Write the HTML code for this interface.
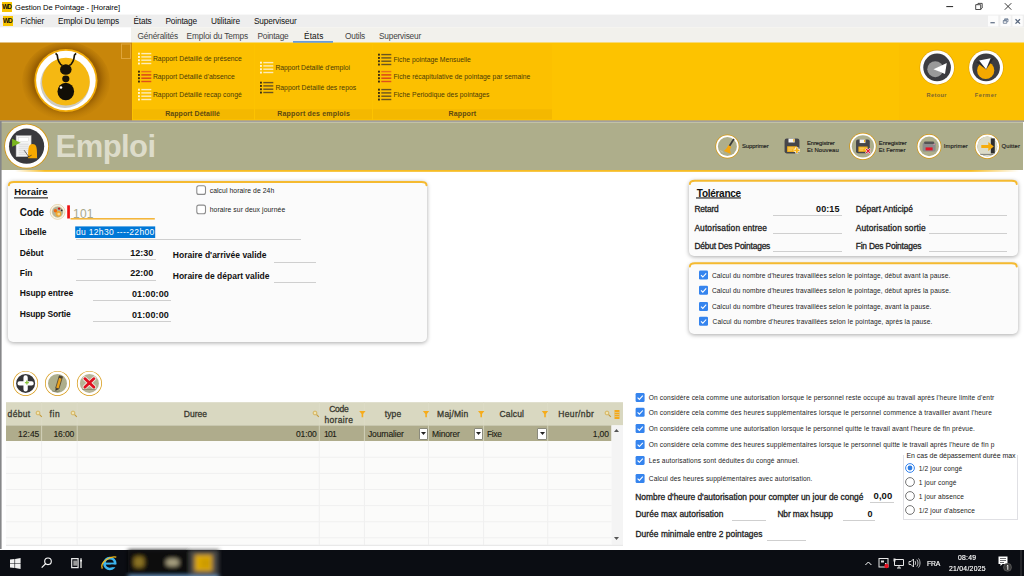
<!DOCTYPE html>
<html><head><meta charset="utf-8"><title>Gestion De Pointage</title>
<style>
*{margin:0;padding:0;box-sizing:border-box}
html,body{width:1024px;height:576px;overflow:hidden;background:#fff;font-family:"Liberation Sans",sans-serif;color:#000}
.a{position:absolute;white-space:nowrap}
.ul{height:1px;background:#cfcfcf}
.cb{width:8.7px;height:8.7px;border:1px solid #7c7c7c;border-radius:2px;background:#fff}
.tbl{font-size:5.8px;line-height:7px;color:#222}
.panel{background:#fbfbfb;border-radius:5px;box-shadow:0 1px 4px rgba(0,0,0,.34);border-top:2px solid #f4b930}
</style></head><body>
<div class="a" style="left:0px;top:0px;width:1024px;height:14px;background:#fff;"></div>
<svg class="a" style="left:0px;top:14px" width="1024" height="14"><rect x="0.00" y="0.60" width="1024.00" height="12.70" fill="#eeeeee"/></svg>
<svg class="a" style="left:131px;top:27px" width="893" height="17"><rect x="0.00" y="0.30" width="893.00" height="16.00" fill="#f2f1ec"/></svg>
<svg class="a" style="left:132px;top:42px" width="892" height="79"><rect x="0.00" y="0.50" width="892.00" height="78.50" fill="#fdc300"/></svg>
<svg class="a" style="left:0px;top:42px" width="132" height="79"><rect x="0.00" y="0.50" width="132.00" height="78.50" fill="#c8860a"/></svg>
<svg class="a" style="left:0px;top:120px" width="1024" height="2"><rect x="0.00" y="0.30" width="1024.00" height="1.70" fill="#a3a09e"/></svg>
<div class="a" style="left:1px;top:122px;width:1022px;height:48px;background:#aeae8b;border-top:1px solid #c2c2a6;"></div>
<div class="a" style="left:1px;top:170px;width:1022px;height:2px;background:linear-gradient(180deg,#f6bc24 0,#f6bc24 70%,rgba(255,255,255,0) 100%),#fff;-webkit-mask-image:linear-gradient(90deg,transparent 0,transparent 14px,#000 44px,#000 970px,transparent 1018px);"></div>
<svg class="a" style="left:0px;top:121px" width="2" height="428"><rect x="0.00" y="0.00" width="1.60" height="428.00" fill="#868789"/></svg>
<div class="a" style="left:0px;top:550px;width:1024px;height:26px;background:#0b0d13;"></div>
<div class="a" style="left:2px;top:2px;width:10px;height:10px;background:#f8c400;font-size:6.500px;line-height:10px;font-weight:bold;letter-spacing:-1.100px;text-indent:-1px;text-align:center;color:#111">WD</div>
<div class="a" style="left:15.0px;top:2.5px;font-size:7.6px;line-height:10px;color:#000;letter-spacing:-0.03px;">Gestion De Pointage - [Horaire]</div>
<svg class="a" style="left:940px;top:0" width="84" height="14" viewBox="0 0 84 14"><path d="M6.300 6.600h6.800" stroke="#222" stroke-width="1" fill="none"/><path d="M35.700 4.700h5v4.800h-5z M37 4.700l1-1.300h4.200v4.600l-1.400 1.300" stroke="#222" stroke-width=".8" fill="none"/><path d="M64.800 3.200l6.500 6.500M71.300 3.200l-6.500 6.500" stroke="#222" stroke-width=".9" fill="none"/></svg>
<div class="a" style="left:2.5px;top:15.5px;width:10.5px;height:10px;background:#f8c400;font-size:6.500px;line-height:10px;font-weight:bold;letter-spacing:-1.100px;text-indent:-1px;text-align:center;color:#111">WD</div>
<div class="a" style="left:20.5px;top:15.7px;font-size:8.3px;line-height:10px;color:#111;letter-spacing:-0.20px;">Fichier</div>
<div class="a" style="left:58.0px;top:15.7px;font-size:8.3px;line-height:10px;color:#111;letter-spacing:-0.15px;">Emploi Du temps</div>
<div class="a" style="left:133.5px;top:15.7px;font-size:8.3px;line-height:10px;color:#111;letter-spacing:-0.18px;">États</div>
<div class="a" style="left:165.5px;top:15.7px;font-size:8.3px;line-height:10px;color:#111;letter-spacing:-0.16px;">Pointage</div>
<div class="a" style="left:211.0px;top:15.7px;font-size:8.3px;line-height:10px;color:#111;letter-spacing:-0.10px;">Utilitaire</div>
<div class="a" style="left:254.0px;top:15.7px;font-size:8.3px;line-height:10px;color:#111;letter-spacing:-0.16px;">Superviseur</div>
<svg class="a" style="left:988px;top:15px" width="11" height="12"><rect x="0.00" y="0.60" width="10.30" height="10.80" fill="#fcfcfc"/></svg>
<svg class="a" style="left:1000px;top:15px" width="11" height="12"><rect x="0.40" y="0.60" width="10.30" height="10.80" fill="#fcfcfc"/></svg>
<svg class="a" style="left:1012px;top:15px" width="11" height="12"><rect x="0.40" y="0.60" width="10.30" height="10.80" fill="#fcfcfc"/></svg>
<svg class="a" style="left:988px;top:15px" width="36" height="12" viewBox="988 15 36 12"><path d="M990.400 22.700h4.400" stroke="#6a788c" stroke-width="1.300"/><path d="M1003.300 20.500h3.400v2.800h-3.400z M1004.600 20.200v-1.300h3.400v2.800h-1" stroke="#6a7a92" stroke-width=".8" fill="none"/><path d="M1003.300 20.900h3.400M1004.600 19.300h3.400" stroke="#6a7a92" stroke-width=".9"/><path d="M1015.500 19.300l4.500 4.300M1020 19.300l-4.500 4.300" stroke="#56657c" stroke-width="1.300" fill="none"/></svg>
<div class="a" style="left:137.5px;top:31.2px;font-size:8.3px;line-height:10px;color:#444;letter-spacing:-0.18px;">Généralités</div>
<div class="a" style="left:186.5px;top:31.2px;font-size:8.3px;line-height:10px;color:#444;letter-spacing:-0.13px;">Emploi du Temps</div>
<div class="a" style="left:257.5px;top:31.2px;font-size:8.3px;line-height:10px;color:#444;letter-spacing:-0.22px;">Pointage</div>
<div class="a" style="left:304.0px;top:31.2px;font-size:8.3px;line-height:10px;color:#111;letter-spacing:0.12px;">États</div>
<div class="a" style="left:345.0px;top:31.2px;font-size:8.3px;line-height:10px;color:#444;letter-spacing:-0.20px;">Outils</div>
<div class="a" style="left:379.0px;top:31.2px;font-size:8.3px;line-height:10px;color:#444;letter-spacing:-0.21px;">Superviseur</div>
<svg class="a" style="left:293px;top:41px" width="40" height="2"><rect x="0.00" y="0.20" width="40.00" height="1.40" fill="#4486dc"/></svg>
<div class="a" style="left:133px;top:44px;width:121px;height:76px;background:#fcc000;"></div>
<svg class="a" style="left:133px;top:109px" width="121" height="11"><rect x="0.00" y="0.30" width="121.00" height="10.00" fill="#f4b800"/></svg>
<div class="a" style="left:165.2px;top:108.8px;font-size:7px;line-height:9px;color:#5e4a10;font-weight:bold;letter-spacing:0.07px;">Rapport Détaillé</div>
<div class="a" style="left:255px;top:44px;width:117px;height:76px;background:#fcc000;"></div>
<svg class="a" style="left:255px;top:109px" width="117" height="11"><rect x="0.00" y="0.30" width="117.00" height="10.00" fill="#f4b800"/></svg>
<div class="a" style="left:277.3px;top:108.8px;font-size:7px;line-height:9px;color:#5e4a10;font-weight:bold;letter-spacing:0.18px;">Rapport des emplois</div>
<div class="a" style="left:373px;top:44px;width:179px;height:76px;background:#fcc000;"></div>
<svg class="a" style="left:373px;top:109px" width="179" height="11"><rect x="0.00" y="0.30" width="179.00" height="10.00" fill="#f4b800"/></svg>
<div class="a" style="left:448.5px;top:108.8px;font-size:7px;line-height:9px;color:#5e4a10;font-weight:bold;letter-spacing:0.14px;">Rapport</div>
<div class="a" style="left:899px;top:44px;width:125px;height:76px;background:#fcc000;"></div>
<svg class="a" style="left:137.5px;top:51.8px" width="14" height="13" viewBox="0 0 14 13"><rect x="0" y="0.7" width="1.900" height="1.900" fill="#fff6d8"/><rect x="3.300" y="0.9" width="10" height="1.400" fill="#fdecb8"/><rect x="0" y="4.0" width="1.900" height="1.900" fill="#fff6d8"/><rect x="3.300" y="4.2" width="10" height="1.400" fill="#fdecb8"/><rect x="0" y="7.3" width="1.900" height="1.900" fill="#fff6d8"/><rect x="3.300" y="7.5" width="10" height="1.400" fill="#fdecb8"/><rect x="0" y="10.6" width="1.900" height="1.900" fill="#fff6d8"/><rect x="3.300" y="10.8" width="10" height="1.400" fill="#fdecb8"/></svg>
<div class="a" style="left:152.9px;top:54.7px;font-size:6.8px;line-height:8px;color:#4a3a08;letter-spacing:0.03px;">Rapport Détaillé de présence</div>
<svg class="a" style="left:137.5px;top:70.3px" width="14" height="13" viewBox="0 0 14 13"><rect x="0" y="0.7" width="1.900" height="1.900" fill="#3a2a10"/><rect x="3.300" y="0.9" width="10" height="1.400" fill="#e8701a"/><rect x="0" y="4.0" width="1.900" height="1.900" fill="#3a2a10"/><rect x="3.300" y="4.2" width="10" height="1.400" fill="#d8401a"/><rect x="0" y="7.3" width="1.900" height="1.900" fill="#3a2a10"/><rect x="3.300" y="7.5" width="10" height="1.400" fill="#d8401a"/><rect x="0" y="10.6" width="1.900" height="1.900" fill="#3a2a10"/><rect x="3.300" y="10.8" width="10" height="1.400" fill="#e0501a"/></svg>
<div class="a" style="left:152.9px;top:73.2px;font-size:6.8px;line-height:8px;color:#4a3a08;letter-spacing:0.02px;">Rapport Détaillé d'absence</div>
<svg class="a" style="left:137.5px;top:88.3px" width="14" height="13" viewBox="0 0 14 13"><rect x="0" y="0.7" width="1.900" height="1.900" fill="#fff6d8"/><rect x="3.300" y="0.9" width="10" height="1.400" fill="#fdecb8"/><rect x="0" y="4.0" width="1.900" height="1.900" fill="#fff6d8"/><rect x="3.300" y="4.2" width="10" height="1.400" fill="#fdecb8"/><rect x="0" y="7.3" width="1.900" height="1.900" fill="#fff6d8"/><rect x="3.300" y="7.5" width="10" height="1.400" fill="#fdecb8"/><rect x="0" y="10.6" width="1.900" height="1.900" fill="#fff6d8"/><rect x="3.300" y="10.8" width="10" height="1.400" fill="#fdecb8"/></svg>
<div class="a" style="left:152.9px;top:91.2px;font-size:6.8px;line-height:8px;color:#4a3a08;letter-spacing:0.03px;">Rapport Détaillé recap congé</div>
<svg class="a" style="left:260px;top:60.9px" width="14" height="13" viewBox="0 0 14 13"><rect x="0" y="0.7" width="1.900" height="1.900" fill="#fff6d8"/><rect x="3.300" y="0.9" width="10" height="1.400" fill="#fdecb8"/><rect x="0" y="4.0" width="1.900" height="1.900" fill="#fff6d8"/><rect x="3.300" y="4.2" width="10" height="1.400" fill="#fdecb8"/><rect x="0" y="7.3" width="1.900" height="1.900" fill="#fff6d8"/><rect x="3.300" y="7.5" width="10" height="1.400" fill="#fdecb8"/><rect x="0" y="10.6" width="1.900" height="1.900" fill="#fff6d8"/><rect x="3.300" y="10.8" width="10" height="1.400" fill="#fdecb8"/></svg>
<div class="a" style="left:275.4px;top:63.8px;font-size:6.8px;line-height:8px;color:#4a3a08;letter-spacing:-0.05px;">Rapport Détaillé d'emploi</div>
<svg class="a" style="left:260px;top:80.7px" width="14" height="13" viewBox="0 0 14 13"><rect x="0" y="0.7" width="1.900" height="1.900" fill="#3a2e12"/><rect x="3.300" y="0.9" width="10" height="1.400" fill="#6a5420"/><rect x="0" y="4.0" width="1.900" height="1.900" fill="#3a2e12"/><rect x="3.300" y="4.2" width="10" height="1.400" fill="#6a5420"/><rect x="0" y="7.3" width="1.900" height="1.900" fill="#3a2e12"/><rect x="3.300" y="7.5" width="10" height="1.400" fill="#6a5420"/><rect x="0" y="10.6" width="1.900" height="1.900" fill="#3a2e12"/><rect x="3.300" y="10.8" width="10" height="1.400" fill="#6a5420"/></svg>
<div class="a" style="left:275.4px;top:83.6px;font-size:6.8px;line-height:8px;color:#4a3a08;letter-spacing:0.01px;">Rapport Détaillé des repos</div>
<svg class="a" style="left:378px;top:53.0px" width="14" height="13" viewBox="0 0 14 13"><rect x="0" y="0.7" width="1.900" height="1.900" fill="#3a2e12"/><rect x="3.300" y="0.9" width="10" height="1.400" fill="#6a5420"/><rect x="0" y="4.0" width="1.900" height="1.900" fill="#3a2e12"/><rect x="3.300" y="4.2" width="10" height="1.400" fill="#6a5420"/><rect x="0" y="7.3" width="1.900" height="1.900" fill="#3a2e12"/><rect x="3.300" y="7.5" width="10" height="1.400" fill="#6a5420"/><rect x="0" y="10.6" width="1.900" height="1.900" fill="#3a2e12"/><rect x="3.300" y="10.8" width="10" height="1.400" fill="#6a5420"/></svg>
<div class="a" style="left:393.4px;top:55.9px;font-size:6.8px;line-height:8px;color:#4a3a08;">Fiche pointage Mensuelle</div>
<svg class="a" style="left:378px;top:70.3px" width="14" height="13" viewBox="0 0 14 13"><rect x="0" y="0.7" width="1.900" height="1.900" fill="#3a2a10"/><rect x="3.300" y="0.9" width="10" height="1.400" fill="#e8701a"/><rect x="0" y="4.0" width="1.900" height="1.900" fill="#3a2a10"/><rect x="3.300" y="4.2" width="10" height="1.400" fill="#d8401a"/><rect x="0" y="7.3" width="1.900" height="1.900" fill="#3a2a10"/><rect x="3.300" y="7.5" width="10" height="1.400" fill="#d8401a"/><rect x="0" y="10.6" width="1.900" height="1.900" fill="#3a2a10"/><rect x="3.300" y="10.8" width="10" height="1.400" fill="#e0501a"/></svg>
<div class="a" style="left:393.4px;top:73.2px;font-size:6.8px;line-height:8px;color:#4a3a08;letter-spacing:0.04px;">Fiche récapitulative de pointage par semaine</div>
<svg class="a" style="left:378px;top:88.3px" width="14" height="13" viewBox="0 0 14 13"><rect x="0" y="0.7" width="1.900" height="1.900" fill="#3a2e12"/><rect x="3.300" y="0.9" width="10" height="1.400" fill="#6a5420"/><rect x="0" y="4.0" width="1.900" height="1.900" fill="#3a2e12"/><rect x="3.300" y="4.2" width="10" height="1.400" fill="#6a5420"/><rect x="0" y="7.3" width="1.900" height="1.900" fill="#3a2e12"/><rect x="3.300" y="7.5" width="10" height="1.400" fill="#6a5420"/><rect x="0" y="10.6" width="1.900" height="1.900" fill="#3a2e12"/><rect x="3.300" y="10.8" width="10" height="1.400" fill="#6a5420"/></svg>
<div class="a" style="left:393.4px;top:91.2px;font-size:6.8px;line-height:8px;color:#4a3a08;letter-spacing:0.03px;">Fiche Periodique des pointages</div>
<svg class="a" style="left:0;top:43px" width="132" height="78" viewBox="0 0 132 78">
<defs><radialGradient id="lg" cx="50%" cy="48%" r="55%"><stop offset="0" stop-color="#7a4800"/><stop offset=".7" stop-color="#9a6002"/><stop offset="1" stop-color="#c8870a" stop-opacity="0"/></radialGradient></defs>
<ellipse cx="66" cy="38" rx="44" ry="39" fill="url(#lg)"/>
<circle cx="65.900" cy="37.500" r="31.600" fill="#f4ae0a"/>
<circle cx="65.900" cy="37.500" r="29.800" fill="#fff"/>
<circle cx="65" cy="40.300" r="24.600" fill="#cfcbc0"/>
<circle cx="65.900" cy="38.700" r="23.900" fill="#f5b812"/>
<path d="M62.500 22.500c-3.500-1.500-4.800-5.500-5.300-10.500l-1.600-1.700M69.200 22.500c3.500-1.500 4.800-5.500 5.300-10.500l1.600-1.700" stroke="#1a1408" stroke-width="1.700" fill="none"/>
<ellipse cx="65.800" cy="26.500" rx="5.800" ry="5.300" fill="#161208"/>
<ellipse cx="65.800" cy="35.800" rx="3.600" ry="3.400" fill="#161208"/>
<ellipse cx="65.800" cy="48.500" rx="8.300" ry="8.800" fill="#120e06"/>
<circle cx="61" cy="44.500" r="1.300" fill="#fff"/>
<rect x="121.500" y="1" width="9" height="14.500" fill="none" stroke="#dfa53a" stroke-width="1"/>
</svg>
<svg class="a" style="left:915px;top:45px" width="95" height="45" viewBox="0 0 95 45">
<g transform="translate(22.100,22.400)"><circle r="17.600" fill="#e0a000"/><circle r="17" fill="#fff"/><circle r="13.800" fill="#3c3c40"/><circle cx="-1.800" cy="1.800" r="8" fill="#9a9a9a"/><path d="M-2 1.800L10-4.500 8 6.800z" fill="#2a2a2e"/><path d="M-3.600 1.800L9.700-4.300 7.900 6.700z" fill="#fff"/></g>
<g transform="translate(71.100,22.400)"><circle r="17.600" fill="#e0a000"/><circle r="17" fill="#fff"/><circle r="13.800" fill="#3c3c40"/><circle cx="-.4" cy="3" r="8.600" fill="#f4a800"/><path d="M-10-5.500L8-9.500 0 2z" fill="#2a2a2e"/><path d="M-7-6.800L4.500-9.200 0 1.800z" fill="#fff"/></g>
</svg>
<div class="a" style="left:926.5px;top:92.4px;font-size:5.6px;line-height:7px;color:#7a6430;font-weight:bold;letter-spacing:0.38px;">Retour</div>
<div class="a" style="left:974.8px;top:92.4px;font-size:5.6px;line-height:7px;color:#7a6430;font-weight:bold;letter-spacing:0.54px;">Fermer</div>
<div class="a" style="left:55.500px;top:128.800px;font-size:31px;line-height:36px;font-weight:bold;color:#dddcca;letter-spacing:-.55px">Emploi</div>
<svg class="a" style="left:3px;top:123px" width="48" height="48" viewBox="0 0 48 48">
<g transform="translate(23.600,23.200)"><circle r="22.400" fill="#d6960c"/><circle r="21.600" fill="#fff"/><circle r="17.600" fill="#38383c"/>
<rect x="-10.500" y="-10.500" width="15" height="21" fill="#f4f4f4" stroke="#bbb" stroke-width=".5"/>
<rect x="-8" y="-8.500" width="10" height="4" fill="#fff" stroke="#ccc" stroke-width=".4"/>
<path d="M-8-2h10M-8 0h10M-8 2h10M-8 4h10M-8 6h10M-8 8h8" stroke="#c8c8c8" stroke-width=".6"/>
<path d="M-14.500-7.500l8.500 4-8.500 4z" fill="#7ab51d"/>
<path d="M1.500 12c0-4 0-10 1-12 1-3 6-3 7 0 1 2 1 8 1 12z" fill="#f6a800"/>
<path d="M-2.500 4l5 7M-1 12l6-3" stroke="#333" stroke-width=".7"/>
</g></svg>
<svg class="a" style="left:713px;top:132px" width="29" height="29" viewBox="-14.40 -14.50 29 29"><circle r="12" fill="#d6960c"/><circle r="11.3" fill="#fff"/><circle r="9.5" fill="#aeae8b"/><path d="M6.500-7.500L2-0.500" stroke="#3a3a3a" stroke-width="1.700"/><path d="M1-1.500l3 2-1.500 2.500 1 4.500-7-3 3-3z" fill="#f4a60c"/><path d="M-7 4l3 2" stroke="#c8c6b0" stroke-width="1"/></svg>
<div class="a" style="left:742.0px;top:143.3px;font-size:5.9px;line-height:7px;color:#1c1c1c;letter-spacing:-0.06px;-webkit-text-stroke:.15px #1c1c1c;">Supprimer</div>
<svg class="a" style="left:782.8px;top:137.4px" width="18" height="18" viewBox="-9 -9 18 18"><g transform="scale(1.350)"><rect x="-5.500" y="-5.500" width="11" height="11" rx="1.600" fill="#46464a"/><rect x="-2.600" y="-5.500" width="4.600" height="2.900" fill="#f4f4f4"/><rect x=".9" y="-5.200" width=".9" height="2" fill="#f6b21a"/><rect x="-3.600" y=".2" width="7.400" height="4.200" fill="#f6b21a"/><path d="M-2.800 1.500h4M-2.800 3h3" stroke="#fbe0a0" stroke-width=".5"/><path d="M1.300 3.200h4.600M3.600 .9v4.600" stroke="#fff" stroke-width="2.300"/><path d="M1.600 3.200h4M3.600 1.200v4" stroke="#f6b21a" stroke-width="1.300"/></g></svg>
<div class="a" style="left:807.0px;top:139.9px;font-size:5.9px;line-height:7px;color:#1c1c1c;letter-spacing:-0.10px;-webkit-text-stroke:.15px #1c1c1c;">Enregistrer</div>
<div class="a" style="left:807.0px;top:147.0px;font-size:5.9px;line-height:7px;color:#1c1c1c;letter-spacing:0.10px;-webkit-text-stroke:.15px #1c1c1c;">Et Nouveau</div>
<svg class="a" style="left:848px;top:132px" width="29" height="29" viewBox="-14.90 -14.30 29 29"><circle r="13.6" fill="#d6960c"/><circle r="12.9" fill="#fff"/><circle r="11.1" fill="#aeae8b"/><g transform="scale(1.250)"><rect x="-5.500" y="-5.500" width="11" height="11" rx="1.600" fill="#46464a"/><rect x="-2.600" y="-5.500" width="4.600" height="2.900" fill="#f4f4f4"/><rect x=".9" y="-5.200" width=".9" height="2" fill="#f6b21a"/><rect x="-3.600" y=".2" width="7.400" height="4.200" fill="#f6b21a"/><path d="M-2.800 1.500h4M-2.800 3h3" stroke="#fbe0a0" stroke-width=".5"/></g><path d="M3 2.500l4.500 4.500M7.500 2.500l-4.500 4.500" stroke="#fff" stroke-width="2.200"/><path d="M3.200 2.700l4.100 4.100M7.300 2.700l-4.100 4.100" stroke="#e01838" stroke-width="1.200"/></svg>
<div class="a" style="left:878.8px;top:139.9px;font-size:5.9px;line-height:7px;color:#1c1c1c;letter-spacing:-0.09px;-webkit-text-stroke:.15px #1c1c1c;">Enregistrer</div>
<div class="a" style="left:878.8px;top:147.0px;font-size:5.9px;line-height:7px;color:#1c1c1c;letter-spacing:0.05px;-webkit-text-stroke:.15px #1c1c1c;">Et Fermer</div>
<svg class="a" style="left:915px;top:132px" width="29" height="29" viewBox="-14.10 -14.40 29 29"><circle r="12.3" fill="#d6960c"/><circle r="11.600000000000001" fill="#fff"/><circle r="9.8" fill="#aeae8b"/><rect x="-6.500" y="-4" width="13" height="9" rx="1.500" fill="#8c8c8c"/><rect x="-5" y="-5" width="10" height="2.500" rx="1" fill="#555"/><rect x="-3.500" y="1" width="7" height="3" fill="#e01828"/><circle cx="5" cy="-2" r=".6" fill="#e8a"/></svg>
<div class="a" style="left:943.7px;top:143.3px;font-size:5.9px;line-height:7px;color:#1c1c1c;letter-spacing:0.13px;-webkit-text-stroke:.15px #1c1c1c;">Imprimer</div>
<svg class="a" style="left:973px;top:132px" width="29" height="29" viewBox="-14.30 -14.40 29 29"><circle r="12.5" fill="#d6960c"/><circle r="11.8" fill="#fff"/><circle r="10.0" fill="#aeae8b"/><circle r="9.800" fill="#dcdbc8"/><rect x="3.500" y="-8" width="4" height="15" fill="#2e2e2e"/><path d="M-6-1.500h7v-3l5.500 4.500-5.500 4.500v-3h-7z" fill="#f6ac0c"/><path d="M-7 8h13" stroke="#666" stroke-width=".8"/></svg>
<div class="a" style="left:1001.6px;top:143.3px;font-size:5.9px;line-height:7px;color:#1c1c1c;letter-spacing:0.10px;-webkit-text-stroke:.15px #1c1c1c;">Quitter</div>
<div class="a" style="left:8px;top:181px;width:419px;height:161px;background:#fbfbfb;border-radius:5px;box-shadow:0 1px 4px rgba(0,0,0,.34)"></div>
<svg class="a" style="left:7px;top:180px" width="422" height="10"><path d="M1.90 5.30Q1.90 2.00 6.90 2.00H414.50Q419.50 2.00 419.50 5.30" fill="none" stroke="#f5ba30" stroke-width="2" stroke-linecap="round"/></svg>
<div class="a" style="left:14.2px;top:186.2px;font-size:9.5px;line-height:12px;color:#111;font-weight:bold;letter-spacing:0.03px;">Horaire</div>
<svg class="a" style="left:14px;top:197px" width="34" height="2"><rect x="0.00" y="0.20" width="34.00" height="1.30" fill="#3c3c3c"/></svg>
<div class="a" style="left:19.8px;top:207.1px;font-size:10px;line-height:12px;color:#111;font-weight:bold;letter-spacing:-0.25px;">Code</div>
<svg class="a" style="left:49px;top:204px" width="17" height="17" viewBox="-8.600 -7.900 17 17"><circle r="7.400" fill="none" stroke="#dcc48a" stroke-width=".7"/><circle r="6.300" fill="#f3e8c8"/><circle r="5.500" fill="#b4b296"/><circle cx=".8" cy="1.900" r="2.900" fill="#f0a830"/><circle cx="1.200" cy="2.200" r="1.400" fill="#f8d890"/><circle cx="-2.200" cy="-1.200" r="1.700" fill="#f06a10"/><circle cx="1.500" cy="-3.300" r="1.200" fill="#c81818"/><circle cx="4.100" cy="-1.600" r=".9" fill="#2a2a2a"/></svg>
<svg class="a" style="left:67px;top:205px" width="3" height="14"><rect x="0.20" y="0.30" width="2.70" height="13.20" fill="#ee1010"/></svg>
<div class="a" style="left:73.0px;top:206.6px;font-size:12px;line-height:15px;color:#a9a98c;letter-spacing:0.23px;">101</div>
<svg class="a" style="left:70px;top:218px" width="85" height="2"><rect x="0.50" y="0.00" width="84.30" height="1.60" fill="#f4b63c"/></svg>
<div class="a" style="left:19.8px;top:226.9px;font-size:8.5px;line-height:11px;color:#111;font-weight:bold;letter-spacing:-0.05px;">Libelle</div>
<svg class="a" style="left:75px;top:226px" width="81" height="12"><rect x="0.20" y="0.40" width="80.00" height="11.60" fill="#0078d7"/></svg>
<div class="a" style="left:76.0px;top:227.1px;font-size:8.5px;line-height:11px;color:#fff;letter-spacing:0.32px;">du 12h30 ----22h00</div>
<div class="a ul" style="left:75.500px;top:238.500px;width:225.500px"></div>
<div class="a" style="left:19.8px;top:247.6px;font-size:8.5px;line-height:11px;color:#111;font-weight:bold;letter-spacing:-0.10px;">Début</div>
<div class="a" style="left:130.2px;top:248.0px;font-size:9px;line-height:11px;color:#111;font-weight:bold;letter-spacing:0.04px;">12:30</div>
<div class="a ul" style="left:76.500px;top:259px;width:79px"></div>
<div class="a" style="left:19.8px;top:268.2px;font-size:8.5px;line-height:11px;color:#111;font-weight:bold;letter-spacing:-0.02px;">Fin</div>
<div class="a" style="left:130.2px;top:268.2px;font-size:9px;line-height:11px;color:#111;font-weight:bold;letter-spacing:0.04px;">22:00</div>
<div class="a ul" style="left:75.500px;top:279.500px;width:80px"></div>
<div class="a" style="left:19.8px;top:288.4px;font-size:8.5px;line-height:11px;color:#111;font-weight:bold;letter-spacing:-0.09px;">Hsupp entree</div>
<div class="a" style="left:131.9px;top:289.0px;font-size:9px;line-height:11px;color:#111;font-weight:bold;letter-spacing:0.12px;">01:00:00</div>
<div class="a ul" style="left:93px;top:300px;width:78px"></div>
<div class="a" style="left:19.8px;top:309.0px;font-size:8.5px;line-height:11px;color:#111;font-weight:bold;letter-spacing:-0.18px;">Hsupp Sortie</div>
<div class="a" style="left:131.9px;top:309.6px;font-size:9px;line-height:11px;color:#111;font-weight:bold;letter-spacing:0.12px;">01:00:00</div>
<div class="a ul" style="left:93px;top:320.500px;width:78px"></div>
<div class="a" style="left:172.8px;top:250.1px;font-size:8.5px;line-height:11px;color:#111;font-weight:bold;">Horaire d'arrivée valide</div>
<div class="a ul" style="left:274px;top:261.500px;width:41.500px"></div>
<div class="a" style="left:172.8px;top:270.8px;font-size:8.5px;line-height:11px;color:#111;font-weight:bold;letter-spacing:-0.01px;">Horaire de départ valide</div>
<div class="a ul" style="left:274px;top:282px;width:41.500px"></div>
<svg class="a" style="left:195px;top:184px" width="12" height="12"><rect x="1.800" y="1.700" width="8.700" height="8.700" rx="2" fill="#fff" stroke="#8c8c8c" stroke-width="1.100"/></svg>
<div class="a" style="left:209.7px;top:187.3px;font-size:6.8px;line-height:8px;color:#222;letter-spacing:0.07px;">calcul horaire de 24h</div>
<svg class="a" style="left:195px;top:203px" width="12" height="12"><rect x="1.800" y="2.100" width="8.700" height="8.700" rx="2" fill="#fff" stroke="#8c8c8c" stroke-width="1.100"/></svg>
<div class="a" style="left:209.7px;top:206.2px;font-size:6.8px;line-height:8px;color:#222;letter-spacing:0.08px;">horaire sur deux journée</div>
<div class="a" style="left:689px;top:180px;width:329px;height:76px;background:#fbfbfb;border-radius:5px;box-shadow:0 1px 4px rgba(0,0,0,.34)"></div>
<svg class="a" style="left:688px;top:178px" width="331" height="10"><path d="M1.90 6.10Q1.90 2.80 6.90 2.80H323.70Q328.70 2.80 328.70 6.10" fill="none" stroke="#f5ba30" stroke-width="2" stroke-linecap="round"/></svg>
<div class="a" style="left:696.8px;top:188.0px;font-size:10px;line-height:12px;color:#111;font-weight:bold;letter-spacing:-0.28px;">Tolérance</div>
<svg class="a" style="left:696px;top:197px" width="45" height="2"><rect x="0.00" y="0.30" width="45.00" height="1.30" fill="#3c3c3c"/></svg>
<div class="a" style="left:694.4px;top:204.1px;font-size:8.4px;line-height:10px;color:#222;letter-spacing:-0.17px;-webkit-text-stroke:.3px #222;">Retard</div>
<div class="a" style="left:816.0px;top:204.1px;font-size:9px;line-height:11px;color:#111;font-weight:bold;letter-spacing:0.12px;">00:15</div>
<div class="a" style="left:855.7px;top:204.1px;font-size:8.4px;line-height:10px;color:#222;letter-spacing:0.03px;-webkit-text-stroke:.3px #222;">Départ Anticipé</div>
<div class="a" style="left:694.4px;top:222.9px;font-size:8.4px;line-height:10px;color:#222;letter-spacing:0.13px;-webkit-text-stroke:.3px #222;">Autorisation entree</div>
<div class="a" style="left:855.7px;top:222.9px;font-size:8.4px;line-height:10px;color:#222;letter-spacing:0.17px;-webkit-text-stroke:.3px #222;">Autorisation sortie</div>
<div class="a" style="left:694.4px;top:241.4px;font-size:8.4px;line-height:10px;color:#222;letter-spacing:-0.18px;-webkit-text-stroke:.3px #222;">Début Des Pointages</div>
<div class="a" style="left:855.7px;top:241.4px;font-size:8.4px;line-height:10px;color:#222;letter-spacing:-0.17px;-webkit-text-stroke:.3px #222;">Fin Des Pointages</div>
<div class="a ul" style="left:772.500px;top:214.5px;width:69px"></div>
<div class="a ul" style="left:929px;top:214.5px;width:77.500px"></div>
<div class="a ul" style="left:772.500px;top:232.9px;width:69px"></div>
<div class="a ul" style="left:929px;top:232.9px;width:77.500px"></div>
<div class="a ul" style="left:772.500px;top:251.4px;width:69px"></div>
<div class="a ul" style="left:929px;top:251.4px;width:77.500px"></div>
<div class="a" style="left:689px;top:263px;width:329px;height:71px;background:#fbfbfb;border-radius:5px;box-shadow:0 1px 4px rgba(0,0,0,.34)"></div>
<svg class="a" style="left:688px;top:261px" width="331" height="10"><path d="M1.90 5.50Q1.90 2.20 6.90 2.20H323.70Q328.70 2.20 328.70 5.50" fill="none" stroke="#f5ba30" stroke-width="2" stroke-linecap="round"/></svg>
<svg class="a" style="left:699px;top:270px" width="11" height="11" viewBox="0.00 -0.60 11 11"><rect width="9" height="9" rx="1.300" fill="#3584ee"/><path d="M2 4.600l1.800 1.800L7.200 2.700" stroke="#fff" stroke-width="1.100" fill="none"/></svg>
<div class="a" style="left:711.9px;top:271.6px;font-size:6.6px;line-height:8px;color:#222;letter-spacing:0.13px;">Calcul du nombre d'heures travaillées selon le pointage, début avant la pause.</div>
<svg class="a" style="left:699px;top:285px" width="11" height="11" viewBox="0.00 -0.70 11 11"><rect width="9" height="9" rx="1.300" fill="#3584ee"/><path d="M2 4.600l1.800 1.800L7.200 2.700" stroke="#fff" stroke-width="1.100" fill="none"/></svg>
<div class="a" style="left:711.9px;top:286.7px;font-size:6.6px;line-height:8px;color:#222;letter-spacing:0.13px;">Calcul du nombre d'heures travaillées selon le pointage, début après la pause.</div>
<svg class="a" style="left:699px;top:302px" width="11" height="11" viewBox="0.00 -0.00 11 11"><rect width="9" height="9" rx="1.300" fill="#3584ee"/><path d="M2 4.600l1.800 1.800L7.200 2.700" stroke="#fff" stroke-width="1.100" fill="none"/></svg>
<div class="a" style="left:711.9px;top:303.0px;font-size:6.6px;line-height:8px;color:#222;letter-spacing:0.13px;">Calcul du nombre d'heures travaillées selon le pointage, avant la pause.</div>
<svg class="a" style="left:699px;top:316px" width="11" height="11" viewBox="0.00 -0.80 11 11"><rect width="9" height="9" rx="1.300" fill="#3584ee"/><path d="M2 4.600l1.800 1.800L7.200 2.700" stroke="#fff" stroke-width="1.100" fill="none"/></svg>
<div class="a" style="left:712.6px;top:317.8px;font-size:6.6px;line-height:8px;color:#222;letter-spacing:0.13px;">Calcul du nombre d'heures travaillées selon le pointage, après la pause.</div>
<svg class="a" style="left:12px;top:370px" width="27" height="27" viewBox="-13.60 -13.40 27 27"><circle r="12.500" fill="#d6960c"/><circle r="11.800" fill="#fff"/><circle r="9.500" fill="#343436"/><path d="M0-6v12M-6 0h12" stroke="#fff" stroke-width="4.300" stroke-linecap="round"/><path d="M1.300-2.800v4M-.7-.8h4" stroke="#8cc63f" stroke-width="1.400"/></svg>
<svg class="a" style="left:44px;top:370px" width="27" height="27" viewBox="-13.50 -13.40 27 27"><circle r="12.500" fill="#d6960c"/><circle r="11.800" fill="#fff"/><circle r="9.500" fill="#aeae8b"/><path d="M1.800-7.600l3.200.9-3.600 12.200-3.200-.9z" fill="#eaa21c" stroke="#4a4234" stroke-width=".8"/><path d="M1.800-7.600l3.200.9-.6 2-3.200-.9z" fill="#4a4234"/><path d="M-1.800 4.600l3.200.9-3.600 2z" fill="#3a342a"/><path d="M-5.500 7.500c2 .8 5 .8 8 0" stroke="#77745c" stroke-width=".7" fill="none"/></svg>
<svg class="a" style="left:76px;top:370px" width="27" height="27" viewBox="-13.40 -13.40 27 27"><circle r="12.500" fill="#d6960c"/><circle r="11.800" fill="#fff"/><circle r="9.500" fill="#b6b396"/><path d="M-4.600-4.800l9.200 8.600M4.600-4.800l-9.200 8.600" stroke="#ecebe0" stroke-width="4.400" stroke-linecap="round"/><path d="M-4.600-4.800l9.200 8.600M4.600-4.800l-9.200 8.600" stroke="#e01020" stroke-width="2.700" stroke-linecap="round"/><path d="M-7 6h13" stroke="#7a775e" stroke-width=".7"/></svg>
<svg class="a" style="left:6px;top:402px" width="617" height="24"><rect x="0.00" y="0.20" width="617.00" height="23.20" fill="#d9d8c1"/></svg>
<svg class="a" style="left:6px;top:425px" width="606" height="17"><rect x="0.00" y="0.40" width="605.50" height="15.70" fill="#afac8c"/></svg>
<svg class="a" style="left:6px;top:441px" width="606" height="104"><rect x="0.00" y="0.10" width="605.50" height="103.70" fill="#fbfbfa"/></svg>
<svg class="a" style="left:611px;top:425px" width="12" height="120"><rect x="0.50" y="0.40" width="11.50" height="119.40" fill="#f4f4f4"/></svg>
<svg class="a" style="left:41px;top:402px" width="2" height="24"><rect x="0.10" y="0.20" width="1.00" height="23.20" fill="#dcdbc6"/></svg>
<svg class="a" style="left:41px;top:425px" width="2" height="17"><rect x="0.10" y="0.40" width="1.00" height="15.70" fill="#d2d1ba"/></svg>
<svg class="a" style="left:41px;top:441px" width="2" height="104"><rect x="0.10" y="0.10" width="1.00" height="103.70" fill="#efefef"/></svg>
<svg class="a" style="left:76px;top:402px" width="2" height="24"><rect x="0.70" y="0.20" width="1.00" height="23.20" fill="#dcdbc6"/></svg>
<svg class="a" style="left:76px;top:425px" width="2" height="17"><rect x="0.70" y="0.40" width="1.00" height="15.70" fill="#d2d1ba"/></svg>
<svg class="a" style="left:76px;top:441px" width="2" height="104"><rect x="0.70" y="0.10" width="1.00" height="103.70" fill="#efefef"/></svg>
<svg class="a" style="left:318px;top:402px" width="2" height="24"><rect x="0.80" y="0.20" width="1.00" height="23.20" fill="#dcdbc6"/></svg>
<svg class="a" style="left:318px;top:425px" width="2" height="17"><rect x="0.80" y="0.40" width="1.00" height="15.70" fill="#d2d1ba"/></svg>
<svg class="a" style="left:318px;top:441px" width="2" height="104"><rect x="0.80" y="0.10" width="1.00" height="103.70" fill="#efefef"/></svg>
<svg class="a" style="left:363px;top:402px" width="2" height="24"><rect x="0.90" y="0.20" width="1.00" height="23.20" fill="#dcdbc6"/></svg>
<svg class="a" style="left:363px;top:425px" width="2" height="17"><rect x="0.90" y="0.40" width="1.00" height="15.70" fill="#d2d1ba"/></svg>
<svg class="a" style="left:363px;top:441px" width="2" height="104"><rect x="0.90" y="0.10" width="1.00" height="103.70" fill="#efefef"/></svg>
<svg class="a" style="left:428px;top:402px" width="1" height="24"><rect x="0.00" y="0.20" width="1.00" height="23.20" fill="#dcdbc6"/></svg>
<svg class="a" style="left:428px;top:425px" width="1" height="17"><rect x="0.00" y="0.40" width="1.00" height="15.70" fill="#d2d1ba"/></svg>
<svg class="a" style="left:428px;top:441px" width="1" height="104"><rect x="0.00" y="0.10" width="1.00" height="103.70" fill="#efefef"/></svg>
<svg class="a" style="left:483px;top:402px" width="2" height="24"><rect x="0.10" y="0.20" width="1.00" height="23.20" fill="#dcdbc6"/></svg>
<svg class="a" style="left:483px;top:425px" width="2" height="17"><rect x="0.10" y="0.40" width="1.00" height="15.70" fill="#d2d1ba"/></svg>
<svg class="a" style="left:483px;top:441px" width="2" height="104"><rect x="0.10" y="0.10" width="1.00" height="103.70" fill="#efefef"/></svg>
<svg class="a" style="left:547px;top:402px" width="2" height="24"><rect x="0.20" y="0.20" width="1.00" height="23.20" fill="#dcdbc6"/></svg>
<svg class="a" style="left:547px;top:425px" width="2" height="17"><rect x="0.20" y="0.40" width="1.00" height="15.70" fill="#d2d1ba"/></svg>
<svg class="a" style="left:547px;top:441px" width="2" height="104"><rect x="0.20" y="0.10" width="1.00" height="103.70" fill="#efefef"/></svg>
<svg class="a" style="left:6px;top:456px" width="606" height="2"><rect x="0.00" y="0.80" width="605.50" height="1.00" fill="#f0f0f0"/></svg>
<svg class="a" style="left:6px;top:472px" width="606" height="2"><rect x="0.00" y="0.90" width="605.50" height="1.00" fill="#f0f0f0"/></svg>
<svg class="a" style="left:6px;top:489px" width="606" height="1"><rect x="0.00" y="0.00" width="605.50" height="1.00" fill="#f0f0f0"/></svg>
<svg class="a" style="left:6px;top:505px" width="606" height="2"><rect x="0.00" y="0.10" width="605.50" height="1.00" fill="#f0f0f0"/></svg>
<svg class="a" style="left:6px;top:521px" width="606" height="2"><rect x="0.00" y="0.20" width="605.50" height="1.00" fill="#f0f0f0"/></svg>
<svg class="a" style="left:6px;top:537px" width="606" height="2"><rect x="0.00" y="0.30" width="605.50" height="1.00" fill="#f0f0f0"/></svg>
<svg class="a" style="left:6px;top:544px" width="617" height="2"><rect x="0.00" y="0.80" width="617.00" height="1.00" fill="#e4e4e4"/></svg>
<div class="a" style="left:7.6px;top:409.3px;font-size:8.5px;line-height:11px;color:#3a3a30;letter-spacing:0.31px;-webkit-text-stroke:.3px #3a3a30;">début</div>
<div class="a" style="left:49.5px;top:409.3px;font-size:8.5px;line-height:11px;color:#3a3a30;letter-spacing:0.64px;-webkit-text-stroke:.3px #3a3a30;">fin</div>
<div class="a" style="left:183.8px;top:409.3px;font-size:8.5px;line-height:11px;color:#3a3a30;letter-spacing:-0.01px;-webkit-text-stroke:.3px #3a3a30;">Duree</div>
<div class="a" style="left:329.3px;top:403.8px;font-size:8.5px;line-height:11px;color:#3a3a30;letter-spacing:-0.33px;-webkit-text-stroke:.3px #3a3a30;">Code</div>
<div class="a" style="left:324.5px;top:415.1px;font-size:8.5px;line-height:11px;color:#3a3a30;letter-spacing:0.33px;-webkit-text-stroke:.3px #3a3a30;">horaire</div>
<div class="a" style="left:384.7px;top:409.4px;font-size:8.5px;line-height:11px;color:#3a3a30;letter-spacing:0.13px;-webkit-text-stroke:.3px #3a3a30;">type</div>
<div class="a" style="left:437.1px;top:409.4px;font-size:8.5px;line-height:11px;color:#3a3a30;letter-spacing:0.21px;-webkit-text-stroke:.3px #3a3a30;">Maj/Min</div>
<div class="a" style="left:499.5px;top:409.4px;font-size:8.5px;line-height:11px;color:#3a3a30;letter-spacing:0.16px;-webkit-text-stroke:.3px #3a3a30;">Calcul</div>
<div class="a" style="left:558.3px;top:409.4px;font-size:8.5px;line-height:11px;color:#3a3a30;letter-spacing:0.35px;-webkit-text-stroke:.3px #3a3a30;">Heur/nbr</div>
<svg class="a" style="left:34.9px;top:409.9px" width="8" height="8" viewBox="0 0 8 8"><circle cx="3" cy="3" r="1.900" fill="#f0e4b0" stroke="#d0a848" stroke-width=".8"/><path d="M4.600 4.600l2.200 2.200" stroke="#c49a3a" stroke-width="1.100"/></svg>
<svg class="a" style="left:69.9px;top:409.9px" width="8" height="8" viewBox="0 0 8 8"><circle cx="3" cy="3" r="1.900" fill="#f0e4b0" stroke="#d0a848" stroke-width=".8"/><path d="M4.600 4.600l2.200 2.200" stroke="#c49a3a" stroke-width="1.100"/></svg>
<svg class="a" style="left:312px;top:409.9px" width="8" height="8" viewBox="0 0 8 8"><circle cx="3" cy="3" r="1.900" fill="#f0e4b0" stroke="#d0a848" stroke-width=".8"/><path d="M4.600 4.600l2.200 2.200" stroke="#c49a3a" stroke-width="1.100"/></svg>
<svg class="a" style="left:604px;top:409.9px" width="8" height="8" viewBox="0 0 8 8"><circle cx="3" cy="3" r="1.900" fill="#f0e4b0" stroke="#d0a848" stroke-width=".8"/><path d="M4.600 4.600l2.200 2.200" stroke="#c49a3a" stroke-width="1.100"/></svg>
<svg class="a" style="left:358px;top:410px" width="9" height="9" viewBox="-0.40 -0.10 9 9"><path d="M.8 1h6.400l-2.400 3v3.200h-1.600v-3.200z" fill="#f6ac1c"/></svg>
<svg class="a" style="left:422px;top:410px" width="9" height="9" viewBox="-0.10 -0.10 9 9"><path d="M.8 1h6.400l-2.400 3v3.200h-1.600v-3.200z" fill="#f6ac1c"/></svg>
<svg class="a" style="left:477px;top:410px" width="9" height="9" viewBox="-0.20 -0.10 9 9"><path d="M.8 1h6.400l-2.400 3v3.200h-1.600v-3.200z" fill="#f6ac1c"/></svg>
<svg class="a" style="left:541px;top:410px" width="9" height="9" viewBox="0.00 -0.10 9 9"><path d="M.8 1h6.400l-2.400 3v3.200h-1.600v-3.200z" fill="#f6ac1c"/></svg>
<svg class="a" style="left:614px;top:410px" width="6" height="9" viewBox="0 0 6 9"><rect x=".5" width="5" height="9" fill="#f4a81a"/><path d="M.5 2.500h5M.5 4.500h5M.5 6.500h5" stroke="#d8cfa0" stroke-width=".7"/></svg>
<div class="a" style="left:18.1px;top:428.6px;font-size:8.5px;line-height:11px;color:#1c1c14;letter-spacing:-0.01px;-webkit-text-stroke:.12px #1c1c14;">12:45</div>
<div class="a" style="left:53.4px;top:428.6px;font-size:8.5px;line-height:11px;color:#1c1c14;letter-spacing:-0.09px;-webkit-text-stroke:.12px #1c1c14;">16:00</div>
<div class="a" style="left:295.9px;top:428.6px;font-size:8.5px;line-height:11px;color:#1c1c14;letter-spacing:-0.09px;-webkit-text-stroke:.12px #1c1c14;">01:00</div>
<div class="a" style="left:323.9px;top:428.6px;font-size:8.5px;line-height:11px;color:#1c1c14;letter-spacing:-0.73px;-webkit-text-stroke:.12px #1c1c14;">101</div>
<div class="a" style="left:368.0px;top:428.6px;font-size:8.5px;line-height:11px;color:#1c1c14;letter-spacing:-0.17px;-webkit-text-stroke:.12px #1c1c14;">Journalier</div>
<div class="a" style="left:432.1px;top:428.6px;font-size:8.5px;line-height:11px;color:#1c1c14;letter-spacing:-0.17px;-webkit-text-stroke:.12px #1c1c14;">Minorer</div>
<div class="a" style="left:486.9px;top:428.6px;font-size:8.5px;line-height:11px;color:#1c1c14;letter-spacing:-0.36px;-webkit-text-stroke:.12px #1c1c14;">Fixe</div>
<div class="a" style="left:592.8px;top:428.6px;font-size:8.5px;line-height:11px;color:#1c1c14;letter-spacing:-0.14px;-webkit-text-stroke:.12px #1c1c14;">1,00</div>
<div class="a" style="left:418.5px;top:427.500px;width:9.3px;height:12px;background:#fff;border:1px solid #8a8a7c;border-radius:1px"></div>
<svg class="a" style="left:420.6px;top:432px" width="5" height="3" viewBox="0 0 5 3"><path d="M0 0h5l-2.500 3z" fill="#222"/></svg>
<div class="a" style="left:473.6px;top:427.500px;width:9.3px;height:12px;background:#fff;border:1px solid #8a8a7c;border-radius:1px"></div>
<svg class="a" style="left:475.8px;top:432px" width="5" height="3" viewBox="0 0 5 3"><path d="M0 0h5l-2.500 3z" fill="#222"/></svg>
<div class="a" style="left:537.4px;top:427.500px;width:9.6px;height:12px;background:#fff;border:1px solid #8a8a7c;border-radius:1px"></div>
<svg class="a" style="left:539.7px;top:432px" width="5" height="3" viewBox="0 0 5 3"><path d="M0 0h5l-2.500 3z" fill="#222"/></svg>
<svg class="a" style="left:614px;top:429px" width="5" height="3" viewBox="0 0 5 3"><path d="M0 3h5l-2.500-3z" fill="#555"/></svg>
<svg class="a" style="left:614px;top:537px" width="5" height="3" viewBox="0 0 5 3"><path d="M0 0h5l-2.500 3z" fill="#555"/></svg>
<svg class="a" style="left:635px;top:393px" width="11" height="11" viewBox="-0.60 -0.00 11 11"><rect width="9" height="9" rx="1.300" fill="#3584ee"/><path d="M2 4.600l1.800 1.800L7.200 2.700" stroke="#fff" stroke-width="1.100" fill="none"/></svg>
<div class="a" style="left:648.8px;top:393.8px;font-size:6.6px;line-height:8px;color:#222;letter-spacing:0.14px;">On considère cela comme une autorisation lorsque le personnel reste occupé au travail après l'heure limite d'entr</div>
<svg class="a" style="left:635px;top:407px" width="11" height="11" viewBox="-0.60 -0.80 11 11"><rect width="9" height="9" rx="1.300" fill="#3584ee"/><path d="M2 4.600l1.800 1.800L7.200 2.700" stroke="#fff" stroke-width="1.100" fill="none"/></svg>
<div class="a" style="left:648.8px;top:408.6px;font-size:6.6px;line-height:8px;color:#222;letter-spacing:0.14px;">On considère cela comme des heures supplémentaires lorsque le personnel commence à travailler avant l'heure</div>
<svg class="a" style="left:635px;top:424px" width="11" height="11" viewBox="-0.60 -0.00 11 11"><rect width="9" height="9" rx="1.300" fill="#3584ee"/><path d="M2 4.600l1.800 1.800L7.200 2.700" stroke="#fff" stroke-width="1.100" fill="none"/></svg>
<div class="a" style="left:648.8px;top:424.8px;font-size:6.6px;line-height:8px;color:#222;letter-spacing:0.13px;">On considère cela comme une autorisation lorsque le personnel quitte le travail avant l'heure de fin prévue.</div>
<svg class="a" style="left:635px;top:440px" width="11" height="11" viewBox="-0.60 -0.10 11 11"><rect width="9" height="9" rx="1.300" fill="#3584ee"/><path d="M2 4.600l1.800 1.800L7.200 2.700" stroke="#fff" stroke-width="1.100" fill="none"/></svg>
<div class="a" style="left:648.8px;top:440.9px;font-size:6.6px;line-height:8px;color:#222;letter-spacing:0.14px;">On considère cela comme des heures supplémentaires lorsque le personnel quitte le travail après l'heure de fin p</div>
<svg class="a" style="left:635px;top:455px" width="11" height="11" viewBox="-0.60 -0.90 11 11"><rect width="9" height="9" rx="1.300" fill="#3584ee"/><path d="M2 4.600l1.800 1.800L7.200 2.700" stroke="#fff" stroke-width="1.100" fill="none"/></svg>
<div class="a" style="left:648.8px;top:456.7px;font-size:6.6px;line-height:8px;color:#222;letter-spacing:0.15px;">Les autorisations sont déduites du congé annuel.</div>
<svg class="a" style="left:635px;top:474px" width="11" height="11" viewBox="-0.60 -0.00 11 11"><rect width="9" height="9" rx="1.300" fill="#3584ee"/><path d="M2 4.600l1.800 1.800L7.200 2.700" stroke="#fff" stroke-width="1.100" fill="none"/></svg>
<div class="a" style="left:648.8px;top:474.8px;font-size:6.6px;line-height:8px;color:#222;letter-spacing:0.14px;">Calcul des heures supplémentaires avec autorisation.</div>
<div class="a" style="left:635.3px;top:491.7px;font-size:8.4px;line-height:10px;color:#222;-webkit-text-stroke:.3px #222;">Nombre d'heure d'autorisation pour compter un jour de congé</div>
<div class="a" style="left:873.6px;top:490.4px;font-size:9.5px;line-height:12px;color:#111;font-weight:bold;letter-spacing:0.05px;">0,00</div>
<div class="a ul" style="left:869.500px;top:501.500px;width:24.500px"></div>
<div class="a" style="left:635.5px;top:509.2px;font-size:8.4px;line-height:10px;color:#222;letter-spacing:0.06px;-webkit-text-stroke:.3px #222;">Durée max autorisation</div>
<div class="a ul" style="left:732px;top:520px;width:33.500px"></div>
<div class="a" style="left:777.4px;top:509.2px;font-size:8.4px;line-height:10px;color:#222;letter-spacing:-0.10px;-webkit-text-stroke:.3px #222;">Nbr max hsupp</div>
<div class="a" style="left:867.4px;top:509.2px;font-size:9px;line-height:11px;color:#111;font-weight:bold;letter-spacing:0.09px;">0</div>
<div class="a ul" style="left:843px;top:520px;width:31.500px"></div>
<div class="a" style="left:635.5px;top:528.7px;font-size:8.4px;line-height:10px;color:#222;letter-spacing:0.04px;-webkit-text-stroke:.3px #222;">Durée minimale entre 2 pointages</div>
<div class="a ul" style="left:767px;top:539.500px;width:38.500px"></div>
<div class="a" style="left:903px;top:455px;width:115px;height:65px;background:#fff;border:1px solid #e0e0e4;border-top:none"></div>
<div class="a" style="left:905px;top:451px;width:112px;height:9px;background:#fff;"></div>
<div class="a" style="left:906.4px;top:451.4px;font-size:7px;line-height:9px;color:#222;letter-spacing:-0.03px;">En cas de dépassement durée max</div>
<svg class="a" style="left:905.300px;top:463px" width="10" height="10" viewBox="-5 -5 10 10"><circle r="4.400" fill="#fff" stroke="#3584ee" stroke-width="1"/><circle r="2.400" fill="#2f7de1"/></svg>
<div class="a" style="left:918.8px;top:464.9px;font-size:6.6px;line-height:8px;color:#222;letter-spacing:0.13px;">1/2 jour congé</div>
<svg class="a" style="left:905.300px;top:477px" width="10" height="10" viewBox="-5 -5 10 10"><circle r="4.400" fill="#fff" stroke="#666" stroke-width=".9"/></svg>
<div class="a" style="left:918.8px;top:478.9px;font-size:6.6px;line-height:8px;color:#222;letter-spacing:0.12px;">1 jour congé</div>
<svg class="a" style="left:905.300px;top:491px" width="10" height="10" viewBox="-5 -5 10 10"><circle r="4.400" fill="#fff" stroke="#666" stroke-width=".9"/></svg>
<div class="a" style="left:918.8px;top:492.9px;font-size:6.6px;line-height:8px;color:#222;letter-spacing:0.14px;">1 jour absence</div>
<svg class="a" style="left:905.300px;top:505px" width="10" height="10" viewBox="-5 -5 10 10"><circle r="4.400" fill="#fff" stroke="#666" stroke-width=".9"/></svg>
<div class="a" style="left:918.8px;top:506.9px;font-size:6.6px;line-height:8px;color:#222;letter-spacing:0.14px;">1/2 jour d'absence</div>
<svg class="a" style="left:0;top:545px" width="230" height="31" viewBox="0 -5 230 31">
<defs><filter id="bl" x="-20%" y="-20%" width="140%" height="140%"><feGaussianBlur stdDeviation="2.300"/></filter></defs>
<path d="M10 9.600l4.500-.6v4.200h-4.500zM15.100 8.900l5.500-.8v5.100h-5.500zM10 13.800h4.500v4.200l-4.500-.6zM15.100 13.800h5.500v5.100l-5.500-.8z" fill="#f0f0f0"/>
<circle cx="48" cy="11.300" r="3.300" fill="none" stroke="#fff" stroke-width="1.100"/><path d="M45.700 13.700l-4 4" stroke="#fff" stroke-width="1.200"/>
<path d="M71.700 8.600h6.400v9h-6.400z" fill="none" stroke="#e8e8e8" stroke-width="1.200"/><rect x="73.300" y="10.500" width="4.600" height="5.200" fill="#9a9a9a"/><path d="M81 8.200v9.800" stroke="#d0d0d0" stroke-width="1.500"/><rect x="80.300" y="10" width="1.500" height="1.500" fill="#fff"/>
<g transform="translate(109.800,13.600)"><circle r="5.400" fill="none" stroke="#3cb4ee" stroke-width="2.700"/><rect x="-5" y="-1" width="10" height="2" fill="#3cb4ee"/><rect x="1" y="1" width="7" height="2.600" fill="#0c0e14"/><path d="M-7.500 5c-3-6 8-13 14-11.500" stroke="#f2b91a" stroke-width="1.300" fill="none"/></g>
<g filter="url(#bl)"><rect x="128" y="0" width="91" height="30" fill="#080a10"/><rect x="189.500" y="0" width="29" height="30" fill="#484846"/>
<rect x="134" y="6.500" width="10" height="11" rx="3" fill="#8a7220"/><rect x="166" y="9" width="13" height="7" rx="3.500" fill="#a8a080"/><rect x="195" y="5" width="17" height="16" fill="#dca800"/><path d="M201 11h9M201 15.500h9" stroke="#b88a08" stroke-width="1.800"/>
<rect x="128" y="26.300" width="91" height="4" fill="#7aaee0"/></g>
</svg>
<svg class="a" style="left:860px;top:550px" width="164" height="26" viewBox="860 0 164 26">
<path d="M865.400 15l3-3 3 3" stroke="#fff" stroke-width="1" fill="none"/>
<rect x="879" y="8.500" width="9" height="8.500" fill="none" stroke="#e8e8e8" stroke-width="1"/><path d="M881 10.500h3v2h-3zM885 13h1.500v2h-1.500z" fill="#ddd"/><circle cx="886.500" cy="16" r="2.200" fill="#e81123"/>
<path d="M894.500 9.500h9v6h-9zM897 18h4M899 15.500v2.500" stroke="#e8e8e8" stroke-width="1" fill="none"/><path d="M893.500 8.500h2v3h-2z" fill="#e8e8e8"/>
<path d="M909 11.500h2l2.500-2.500v8l-2.500-2.500h-2z" fill="none" stroke="#e8e8e8" stroke-width=".9"/><path d="M915 11c.8.800.8 3.200 0 4M916.800 9.500c1.600 1.600 1.600 5.400 0 7M918.500 8.500c2 2 2 7 0 9" stroke="#e8e8e8" stroke-width=".8" fill="none"/>
<path d="M998.500 6.500h9v7.500h-5l-2 2v-2h-2z" fill="#fff"/><path d="M1000 8.500h6M1000 10.500h6M1000 12.500h4" stroke="#0c0e14" stroke-width=".6"/>
<circle cx="1007.500" cy="17.300" r="4" fill="#3a3a3a" stroke="#777" stroke-width=".5"/><path d="M1006.800 16l1-.8v4.600" stroke="#fff" stroke-width=".9" fill="none"/>
<path d="M1021 0v26" stroke="#555" stroke-width=".7"/>
</svg>
<div class="a" style="left:927.0px;top:559.7px;font-size:6.8px;line-height:8px;color:#fff;letter-spacing:-0.17px;will-change:transform;-webkit-text-stroke:.15px #fff;">FRA</div>
<div class="a" style="left:958.3px;top:554.1px;font-size:6.8px;line-height:8px;color:#fff;letter-spacing:0.24px;will-change:transform;-webkit-text-stroke:.15px #fff;">08:49</div>
<div class="a" style="left:949.1px;top:565.4px;font-size:6.8px;line-height:8px;color:#fff;letter-spacing:0.28px;will-change:transform;-webkit-text-stroke:.15px #fff;">21/04/2025</div>
</body></html>
